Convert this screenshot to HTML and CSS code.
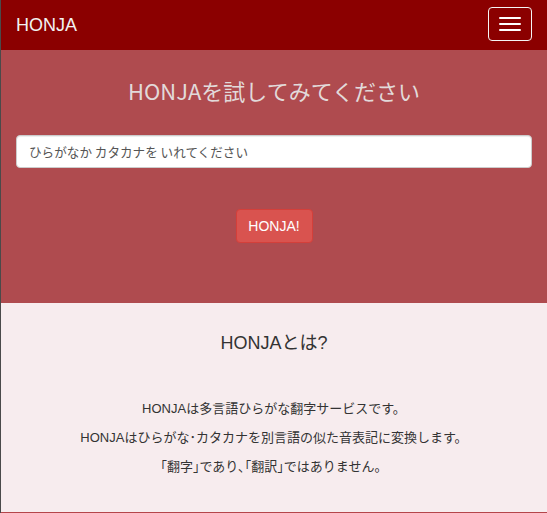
FILE: index.html
```html
<!DOCTYPE html>
<html lang="ja">
<head>
<meta charset="utf-8">
<title>HONJA</title>
<link rel="stylesheet" href="styles.css">
</head>
<body>
<div class="page">
  <nav class="navbar">
    <span class="brand">HONJA</span>
    <button class="toggle" type="button" aria-label="menu">
      <span class="bar"></span><span class="bar"></span><span class="bar"></span>
    </button>
  </nav>
  <section class="hero">
    <h2 class="hero-title">HONJAを試してみてください</h2>
    <input class="hero-input" type="text" placeholder="ひらがなか カタカナを いれてください">
    <div class="hero-actions">
      <button class="btn-honja" type="button">HONJA!</button>
    </div>
  </section>
  <section class="about">
    <h3 class="about-title">HONJAとは?</h3>
    <p class="about-text">HONJAは多言語ひらがな翻字サービスです。</p>
    <p class="about-text">HONJAはひらがな･カタカナを別言語の似た音表記に変換します。</p>
    <p class="about-text">｢翻字｣であり､｢翻訳｣ではありません。</p>
  </section>
  <div class="footer-line"></div>
</div>
</body>
</html>
```
FILE: styles.css
```css
* { box-sizing: border-box; }
html, body { margin: 0; padding: 0; }
body {
  font-family: "Liberation Sans", "Noto Sans CJK JP", sans-serif;
  font-size: 14px;
  line-height: 1.42857;
  color: #333;
  background: #f7ecee;
}
.page {
  border-left: 1px solid #4a4a4a;
  min-height: 513px;
  display: flex;
  flex-direction: column;
}
.navbar {
  height: 50px;
  background: #8b0000;
  display: flex;
  align-items: center;
  justify-content: space-between;
  padding: 0 15px 0 15px;
}
.brand {
  color: #f2f2f2;
  font-size: 18px;
  line-height: 20px;
}
.toggle {
  width: 44px;
  height: 34px;
  margin-top: -2px;
  background: transparent;
  border: 1px solid #f5f5f5;
  border-radius: 4px;
  display: flex;
  flex-direction: column;
  align-items: center;
  justify-content: center;
  gap: 4px;
  padding: 0;
}
.bar {
  display: block;
  width: 22px;
  height: 2px;
  background: #fff;
  border-radius: 1px;
}
.hero {
  background: #af4b4f;
  padding: 26px 15px 60px 15px;
  display: flex;
  flex-direction: column;
  height: 253px;
}
.hero-title {
  margin: 0;
  text-align: center;
  font-family: "Noto Sans CJK JP", "Noto Sans", sans-serif;
  font-weight: 400;
  font-size: 22px;
  line-height: 28px;
  color: #e2dada;
}
.hero-input {
  margin-top: 31px;
  height: 34px;
  width: 100%;
  border: 1px solid #ccc;
  border-radius: 4px;
  background: #fff;
  padding: 6px 12px;
  font-family: "Noto Sans CJK JP", sans-serif;
  font-size: 12.6px;
  color: #555;
  box-shadow: inset 0 1px 1px rgba(0,0,0,.075);
}
.hero-input::placeholder { color: #555; opacity: 1; }
.hero-actions {
  margin-top: 41px;
  display: flex;
  justify-content: center;
}
.btn-honja {
  width: 77px;
  height: 34px;
  background: #d9534f;
  border: 1px solid #d43f3a;
  border-radius: 4px;
  color: #fff;
  font-family: "Liberation Sans", "Noto Sans CJK JP", sans-serif;
  font-size: 14px;
  padding: 0;
}
.about {
  flex: 1;
  padding: 28px 15px 0 15px;
  text-align: center;
}
.about-title {
  margin: 0 0 44px 0;
  font-weight: 400;
  font-size: 18px;
  line-height: 24px;
  color: #333;
}
.about-text {
  margin: 0 0 9px 0;
  font-size: 13px;
  line-height: 20px;
  color: #333;
}
.footer-line {
  height: 1px;
  background: #b5454a;
}
```
